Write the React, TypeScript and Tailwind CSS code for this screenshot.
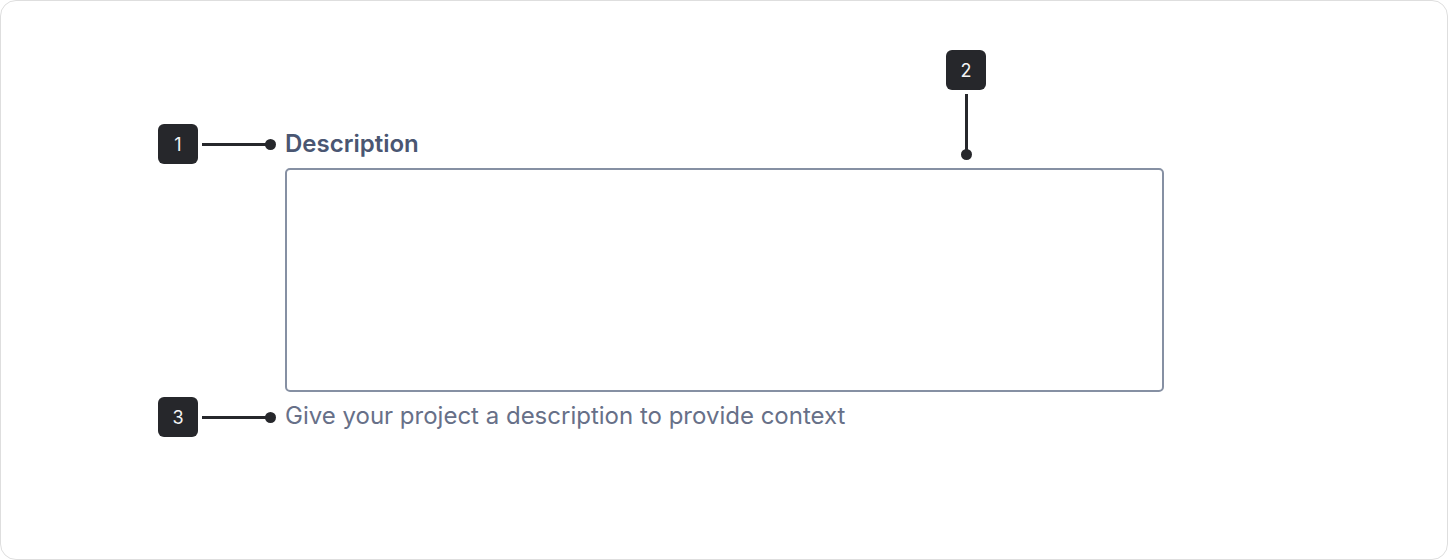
import React from 'react';

type PinProps = {
  n: number;
  className: string;
  vertical?: boolean;
};

// Numbered callout: dark badge with a leader line ending in a dot
const Pin: React.FC<PinProps> = ({ n, className, vertical }) => (
  <div className={`absolute flex ${vertical ? 'flex-col' : 'flex-row'} items-center ${className}`}>
    <div className="w-10 h-10 rounded-md bg-[#26272b] text-[#f4f4f5] text-[18px] flex items-center justify-center">
      {n}
    </div>
    {vertical ? (
      <div className="flex flex-col items-center">
        <div className="w-[3px] h-[56px] mt-[4px] bg-[#26272b]" />
        <div className="w-[11px] h-[11px] -mt-[1px] rounded-full bg-[#26272b]" />
      </div>
    ) : (
      <div className="flex items-center">
        <div className="h-[3px] w-[64px] ml-[4px] bg-[#26272b]" />
        <div className="w-[11px] h-[11px] -ml-[1px] rounded-full bg-[#26272b]" />
      </div>
    )}
  </div>
);

export default function App() {
  return (
    <div className="w-[1448px] h-[560px] bg-white" style={{ fontFamily: 'Inter, "Noto Sans", sans-serif' }}>
      <div className="w-full h-full border border-[#dedede] rounded-2xl pt-[129px] pl-[284px]">
        <div className="relative w-[879px] flex flex-col">
          <label className="text-[24px] leading-[28px] font-semibold text-[#4a5672]">Description</label>
          <textarea className="mt-[10px] h-[224px] w-full resize-none rounded-[5px] border-2 border-[#8690a3] bg-white outline-none" />
          <p className="mt-[10px] text-[24px] leading-[28px] text-[#677088]">
            Give your project a description to provide context
          </p>

          <Pin n={1} className="-left-[127px] -top-[6px]" />
          <Pin n={2} vertical className="left-[661px] -top-[80px]" />
          <Pin n={3} className="-left-[127px] top-[267px]" />
        </div>
      </div>
    </div>
  );
}
